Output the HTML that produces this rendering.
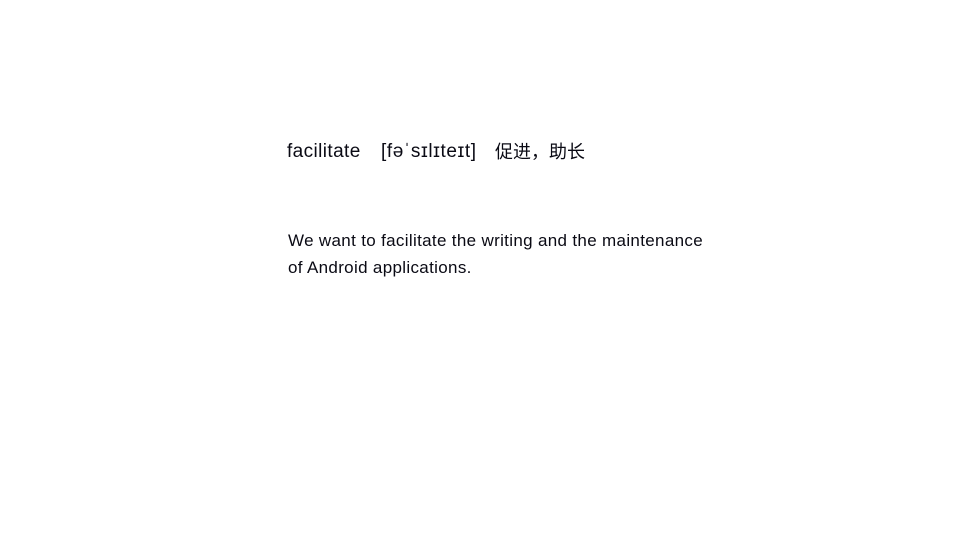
<!DOCTYPE html>
<html><head><meta charset="utf-8"><style>
html,body{margin:0;width:960px;height:540px;background:#fff;overflow:hidden}
.t{position:absolute;font-family:"Liberation Sans","Noto Sans CJK SC",sans-serif;color:#0a0a14;white-space:nowrap}
</style></head><body>
<div class="t" style="left:287px;top:141px;font-size:19px;line-height:22px;letter-spacing:0.4px">facilitate</div>
<div class="t" style="left:381px;top:141px;font-size:19px;line-height:22px;letter-spacing:0.6px">[fəˈsɪlɪteɪt]</div>
<div class="t" style="left:495px;top:141px;font-size:18px;line-height:22px">促进，助长</div>
<div class="t" style="left:288px;top:227px;font-size:17px;line-height:27px;letter-spacing:0.33px">We want to facilitate the writing and the maintenance<br>of Android applications.</div>
</body></html>
